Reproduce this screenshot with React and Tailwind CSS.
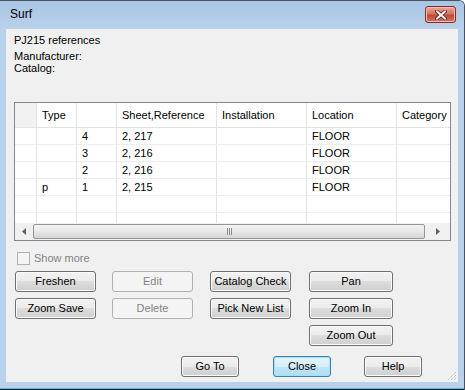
import React from 'react';

const rows = [
    { type: '', num: '4', ref: '2, 217', inst: '', loc: 'FLOOR' },
    { type: '', num: '3', ref: '2, 216', inst: '', loc: 'FLOOR' },
    { type: '', num: '2', ref: '2, 216', inst: '', loc: 'FLOOR' },
    { type: 'p', num: '1', ref: '2, 215', inst: '', loc: 'FLOOR' },
    { type: '', num: '', ref: '', inst: '', loc: '' },
    { type: '', num: '', ref: '', inst: '', loc: '' },
];

function Button({ children, disabled, isDefault, className = '' }) {
    let look = 'border-[#707070] bg-[linear-gradient(#f2f2f2,#ebebeb_50%,#dddddd_50%,#cfcfcf)] shadow-[inset_0_0_0_1px_#fbfbfb] text-black';
    if (disabled) look = 'border-[#adb2b5] bg-[#f4f4f4] text-[#838383]';
    if (isDefault) look = 'border-[#3c7fb1] bg-[linear-gradient(#e5f4fc,#d7effb_50%,#c0e5f7_50%,#b1ddf4)] shadow-[inset_0_0_0_1px_#9ee3f7] text-black';
    return (
        <div className={`h-[21px] flex items-center justify-center rounded-[3px] border text-[11px] leading-none ${look} ${className}`}>
            {children}
        </div>
    );
}

function Cell({ w, children, last, className = '' }) {
    return (
        <div className={`${w} h-full flex items-center pl-[5px] shrink-0 ${last ? 'flex-1' : 'border-r border-[#e3e3e3]'} ${className}`}>
            {children}
        </div>
    );
}

export default function App() {
    return (
        <div className="w-[465px] h-[390px] flex flex-col bg-[#b9d1ea] border-t border-r border-[#4a5260] rounded-tr-[6px] overflow-hidden" style={{ fontFamily: '"Liberation Sans", Arial, sans-serif' }}>
            {/* title bar */}
            <div className="h-[28px] flex items-center pl-[10px] pr-[8px] bg-[linear-gradient(#a9c5e4,#b9d1ea)]">
                <span className="text-[12px] text-black flex-1 pb-[2px]">Surf</span>
                <div className="w-[31px] h-[17px] mb-[1px] rounded-[3px] border border-[#8a2a22] bg-[linear-gradient(#e9a99c,#d47461_45%,#c14a36_55%,#d2735e)] flex items-center justify-center shadow-[inset_0_0_0_1px_#f0bfb4]">
                    <svg width="12" height="10" viewBox="0 0 12 10">
                        <path d="M2 1.5 L10 8.5 M10 1.5 L2 8.5" stroke="#5a1a12" strokeWidth="3.6" strokeLinecap="square" />
                        <path d="M2 1.5 L10 8.5 M10 1.5 L2 8.5" stroke="#ffffff" strokeWidth="2" strokeLinecap="square" />
                    </svg>
                </div>
            </div>

            <div className="flex h-[353px]">
                <div className="w-[6px]" />
                {/* client area */}
                <div className="w-[452px] bg-[#f0f0f0] relative flex flex-col text-[11px] text-black">
                    <div className="pl-[8px] pt-[5px]">
                        <div className="leading-[13px] mb-[3px]">PJ215 references</div>
                        <div className="leading-[12px]">Manufacturer:</div>
                        <div className="leading-[12px]">Catalog:</div>
                    </div>

                    {/* list view */}
                    <div className="ml-[8px] mt-[28px] w-[437px] h-[139px] border border-[#828790] bg-white flex flex-col">
                        <div className="flex-1 overflow-hidden">
                            <div className="flex h-[25px] border-b border-[#e3e3e3]">
                                <Cell w="w-[22px]" className="bg-[#f2f2f2]"></Cell>
                                <Cell w="w-[40px]">Type</Cell>
                                <Cell w="w-[40px]"></Cell>
                                <Cell w="w-[100px]">Sheet,Reference</Cell>
                                <Cell w="w-[90px]">Installation</Cell>
                                <Cell w="w-[90px]">Location</Cell>
                                <Cell w="w-[53px]" last className="pl-[4px]">Category</Cell>
                            </div>
                            {rows.map((r, i) => (
                                <div key={i} className="flex h-[17px] border-b border-[#ededed]">
                                    <Cell w="w-[22px]"></Cell>
                                    <Cell w="w-[40px]">{r.type}</Cell>
                                    <Cell w="w-[40px]">{r.num}</Cell>
                                    <Cell w="w-[100px]">{r.ref}</Cell>
                                    <Cell w="w-[90px]">{r.inst}</Cell>
                                    <Cell w="w-[90px]">{r.loc}</Cell>
                                    <Cell w="w-[53px]" last></Cell>
                                </div>
                            ))}
                        </div>
                        {/* horizontal scrollbar */}
                        <div className="h-[17px] flex items-center bg-[#f0f0f0] shrink-0">
                            <div className="w-[18px] h-full flex items-center justify-center">
                                <svg width="4" height="7" viewBox="0 0 4 7"><path d="M4 0 L0 3.5 L4 7 Z" fill="#606060" /></svg>
                            </div>
                            <div className="w-[392px] h-[15px] rounded-[2px] border border-[#979797] bg-[linear-gradient(#f3f3f3,#e8e8e8_50%,#d6d6d6)] flex items-center justify-center gap-[1px]">
                                <span className="w-[1px] h-[7px] bg-[#8a8a8a]" />
                                <span className="w-[1px] h-[7px] bg-[#8a8a8a]" />
                                <span className="w-[1px] h-[7px] bg-[#8a8a8a]" />
                            </div>
                            <div className="flex-1 h-full flex items-center justify-center">
                                <svg width="4" height="7" viewBox="0 0 4 7"><path d="M0 0 L4 3.5 L0 7 Z" fill="#606060" /></svg>
                            </div>
                        </div>
                    </div>

                    {/* show more */}
                    <div className="flex items-center mt-[11px] ml-[11px] h-[13px]">
                        <div className="w-[13px] h-[13px] border border-[#b1b1b1] bg-[#f4f4f4]" />
                        <span className="ml-[4px] text-[#838383]">Show more</span>
                    </div>

                    {/* buttons */}
                    <div className="flex mt-[6px] ml-[9px]">
                        <div className="flex flex-col gap-[6px] w-[81px]">
                            <Button>Freshen</Button>
                            <Button>Zoom Save</Button>
                        </div>
                        <div className="flex flex-col gap-[6px] w-[81px] ml-[16px]">
                            <Button disabled>Edit</Button>
                            <Button disabled>Delete</Button>
                        </div>
                        <div className="flex flex-col gap-[6px] w-[81px] ml-[17px]">
                            <Button>Catalog Check</Button>
                            <Button>Pick New List</Button>
                        </div>
                        <div className="flex flex-col gap-[6px] w-[84px] ml-[18px]">
                            <Button>Pan</Button>
                            <Button>Zoom In</Button>
                            <Button>Zoom Out</Button>
                        </div>
                    </div>

                    <div className="flex mt-[10px] ml-[175px]">
                        <Button className="w-[58px]">Go To</Button>
                        <Button isDefault className="w-[58px] ml-[34px]">Close</Button>
                        <Button className="w-[58px] ml-[33px]">Help</Button>
                    </div>

                    {/* size grip */}
                    <svg className="absolute right-[1px] bottom-[1px]" width="11" height="11" viewBox="0 0 11 11">
                        <path d="M10 2 L2 10 M10 5 L5 10 M10 8 L8 10" stroke="#a9a9a9" strokeWidth="1" strokeDasharray="1 1" />
                        <path d="M11 2 L2 11 M11 5 L5 11 M11 8 L8 11" stroke="#ffffff" strokeWidth="1" strokeDasharray="1 1" />
                    </svg>
                </div>
                <div className="flex-1" />
            </div>
            <div className="h-[6px]" />
            <div className="h-[1px] bg-[#3fc4ea]" />
            <div className="h-[1px] bg-[#1a1a1a]" />
        </div>
    );
}
